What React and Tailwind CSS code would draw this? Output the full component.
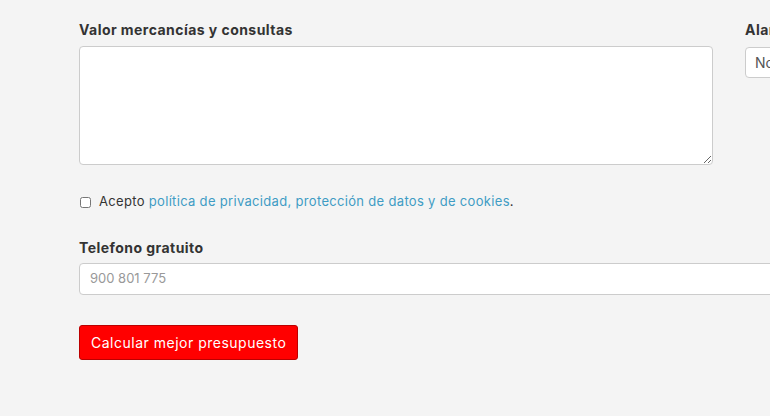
export default function App() {
  return (
    <div className="w-[770px] h-[416px] overflow-hidden bg-[#f4f4f4] text-[#333]" style={{ fontFamily: 'Inter, "Noto Sans", sans-serif' }}>
      <div className="w-[1100px] pl-[79px] pt-[20px]">
        <div className="flex gap-[32px]">
          <div className="w-[634px] flex flex-col">
            <label className="text-[14px] font-bold leading-[20px] mb-[6px] tracking-[0.45px] text-[#333]">Valor mercancías y consultas</label>
            <textarea className="w-full h-[119px] bg-white border border-[#ccc] rounded-[4px] resize-y outline-none"></textarea>
          </div>
          <div className="w-[300px] flex flex-col">
            <label className="text-[14px] font-bold leading-[20px] mb-[7px] tracking-[0.45px] text-[#333]">Alarma</label>
            <div className="h-[31px] bg-white border border-[#ccc] rounded-[4px] flex items-center px-[9px] text-[14px] text-[#555]">No</div>
          </div>
        </div>
        <div className="flex items-center mt-[30px] h-[14px]">
          <input type="checkbox" className="w-[11px] h-[11px] ml-[1px] mr-[8px] m-0" />
          <span className="text-[13px] tracking-[0.32px] text-[#333]">Acepto <span className="text-[#3f9cc4]">política de privacidad, protección de datos y de cookies</span>.</span>
        </div>
        <div className="mt-[29px] flex flex-col w-[980px]">
          <label className="text-[14px] font-bold leading-[20px] mb-[5px] tracking-[0.45px] text-[#333]">Telefono gratuito</label>
          <div className="h-[32px] bg-white border border-[#ccc] rounded-[4px] flex items-center px-[10px] text-[13px] text-[#999]">900 801 775</div>
        </div>
        <button className="mt-[30px] h-[35px] px-[11px] bg-[#f00] border border-[#b00] rounded-[3px] text-white text-[14px] tracking-[0.5px]">Calcular mejor presupuesto</button>
      </div>
    </div>
  );
}
